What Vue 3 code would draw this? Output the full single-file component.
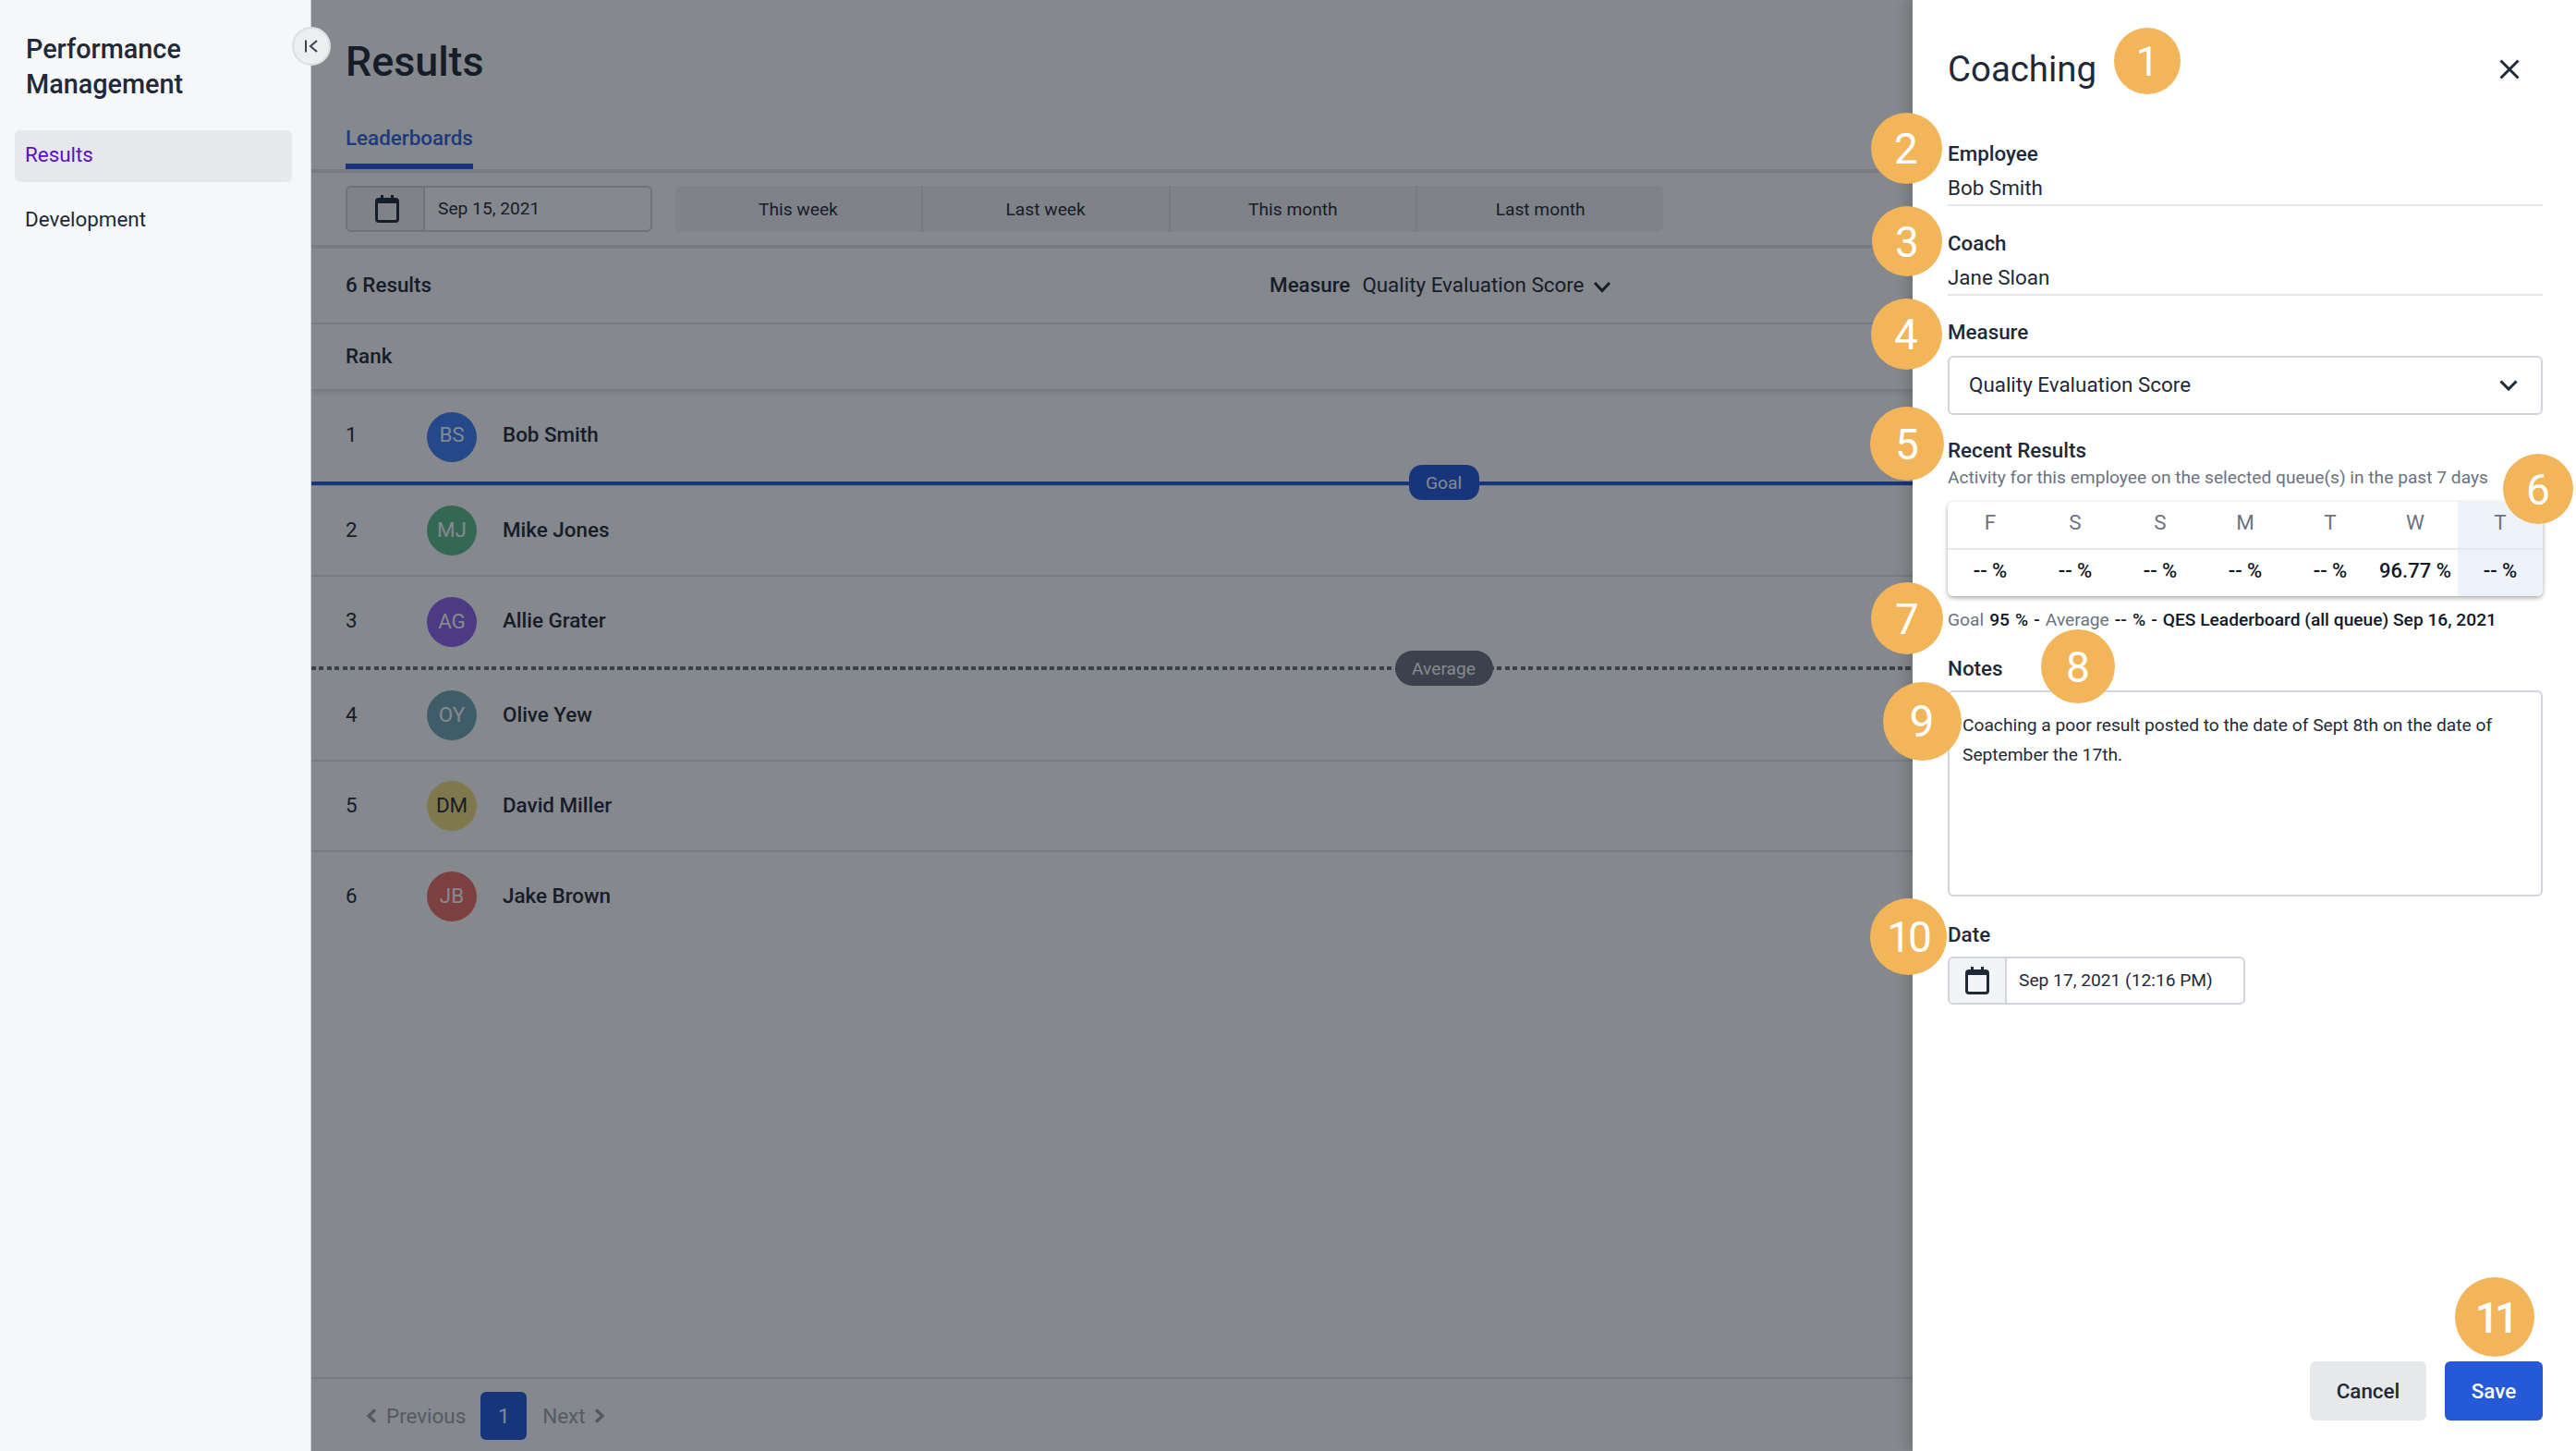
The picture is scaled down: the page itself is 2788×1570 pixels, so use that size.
<template>
  <div class="page">
    <!-- left nav -->
    <aside class="sidebar">
      <h1 class="app-title">Performance Management</h1>
      <a class="nav-item active">Results</a>
      <a class="nav-item">Development</a>
      <button class="collapse-btn">
        <svg width="14" height="14" viewBox="0 0 14 14" fill="none" stroke="#374151" stroke-width="2">
          <path d="M1 .5v13M13 1 6 7l7 6" />
        </svg>
      </button>
    </aside>

    <!-- results page, dimmed by the drawer -->
    <main class="main">
      <h2 class="page-title">Results</h2>
      <div class="tabs">
        <span class="tab">Leaderboards</span>
      </div>

      <div class="toolbar">
        <div class="date-field big">
          <span class="date-icon">
            <svg width="26" height="30" viewBox="0 0 26 30">
              <path d="M6 0h3v3h8V0h3v3h2a4 4 0 0 1 4 4v19a4 4 0 0 1-4 4H4a4 4 0 0 1-4-4V7a4 4 0 0 1 4-4h2zM3 9v17a1 1 0 0 0 1 1h18a1 1 0 0 0 1-1V9z" fill="#1f2937" />
            </svg>
          </span>
          <span class="date-text">Sep 15, 2021</span>
        </div>
        <div class="presets">
          <span v-for="p in presets" :key="p" class="preset">{{ p }}</span>
        </div>
      </div>

      <div class="summary">
        <span class="medium">6 Results</span>
        <div class="measure">
          <span class="medium">Measure</span>
          <span class="measure-value">Quality Evaluation Score</span>
          <svg class="measure-chevron" width="20" height="14" viewBox="0 0 20 14" fill="none" stroke="#1f2937" stroke-width="3">
            <path d="M2 3l8 8.500L18 3" />
          </svg>
        </div>
      </div>

      <div class="table-head medium"><span>Rank</span></div>

      <template v-for="row in rows" :key="row.rank">
        <div class="row" :class="row.cls">
          <span class="rank">{{ row.rank }}</span>
          <span class="avatar" :style="{ background: row.color, color: row.text || '#fff' }">{{ row.initials }}</span>
          <span class="name">{{ row.name }}</span>
        </div>
        <div v-if="row.rank === 1" class="goal-line">
          <span class="pill goal-pill">Goal</span>
        </div>
        <div v-if="row.rank === 3" class="average-line">
          <span class="pill average-pill">Average</span>
        </div>
      </template>

      <div class="pager">
        <svg width="12" height="16" viewBox="0 0 12 16" fill="none" stroke="#9ca3af" stroke-width="3.500">
          <path d="M10 1.500 3 8l7 6.500" />
        </svg>
        <span class="pager-text prev">Previous</span>
        <span class="page-num">1</span>
        <span class="pager-text next">Next</span>
        <svg width="12" height="16" viewBox="0 0 12 16" fill="none" stroke="#9ca3af" stroke-width="3.500">
          <path d="M2 1.500 9 8l-7 6.500" />
        </svg>
      </div>

      <div class="overlay"></div>
    </main>

    <!-- coaching drawer -->
    <section class="drawer">
      <header class="drawer-head">
        <h2 class="drawer-title">Coaching</h2>
        <svg class="close-icon" width="22" height="22" viewBox="0 0 22 22" fill="none" stroke="#1f2937" stroke-width="3">
          <path d="M1.500 1.500l19 19M20.500 1.500l-19 19" />
        </svg>
      </header>

      <label class="label">Employee</label>
      <div class="readonly">Bob Smith</div>

      <label class="label coach-label">Coach</label>
      <div class="readonly">Jane Sloan</div>

      <label class="label measure-label">Measure</label>
      <div class="select">
        <span>Quality Evaluation Score</span>
        <svg width="20" height="12" viewBox="0 0 20 12" fill="none" stroke="#1f2937" stroke-width="3">
          <path d="M1.500 1.500 10 10l8.500-8.500" />
        </svg>
      </div>

      <label class="label recent-label">Recent Results</label>
      <p class="hint">Activity for this employee on the selected queue(s) in the past 7 days</p>

      <div class="week">
        <div v-for="(d, i) in days" :key="i" class="day" :class="{ today: i === 6 }">
          <span class="day-name">{{ d.name }}</span>
          <span class="day-value">{{ d.value }}</span>
        </div>
      </div>

      <p class="goal-note"><span class="muted">Goal</span>&nbsp;<b>95 % -</b>&nbsp;<span class="muted">Average</span>&nbsp;<b>-- % -</b>&nbsp;<b class="source">QES Leaderboard (all queue) Sep 16, 2021</b></p>

      <label class="label notes-label">Notes</label>
      <div class="notes">Coaching a poor result posted to the date of Sept 8th on the date of September the 17th.</div>

      <label class="label date-label">Date</label>
      <div class="date-field small">
        <span class="date-icon">
          <svg width="26" height="30" viewBox="0 0 26 30">
            <path d="M6 0h3v3h8V0h3v3h2a4 4 0 0 1 4 4v19a4 4 0 0 1-4 4H4a4 4 0 0 1-4-4V7a4 4 0 0 1 4-4h2zM3 9v17a1 1 0 0 0 1 1h18a1 1 0 0 0 1-1V9z" fill="#1f2937" />
          </svg>
        </span>
        <span class="date-text">Sep 17, 2021 (12:16 PM)</span>
      </div>

      <footer class="actions">
        <button class="btn cancel">Cancel</button>
        <button class="btn save">Save</button>
      </footer>
    </section>

    <!-- numbered callouts sit on top of everything -->
    <span
      v-for="b in badges"
      :key="b.n"
      class="badge"
      :class="{ tight: b.n > 9, eleven: b.n === 11 }"
      :style="{ left: b.x - b.d / 2 + 'px', top: b.y - b.d / 2 + 'px', width: b.d + 'px', height: b.d + 'px', fontSize: b.f + 'px' }"
    >{{ b.n }}</span>
  </div>
</template>

<script setup>
const presets = ['This week', 'Last week', 'This month', 'Last month']

const rows = [
  { rank: 1, initials: 'BS', name: 'Bob Smith', color: '#3d7ffb', cls: 'r1' },
  { rank: 2, initials: 'MJ', name: 'Mike Jones', color: '#5fbf8f', cls: 'r2' },
  { rank: 3, initials: 'AG', name: 'Allie Grater', color: '#8e62f0', cls: 'r3' },
  { rank: 4, initials: 'OY', name: 'Olive Yew', color: '#70a9b8', cls: 'r4' },
  { rank: 5, initials: 'DM', name: 'David Miller', color: '#f5de80', text: '#1f2937', cls: 'r5' },
  { rank: 6, initials: 'JB', name: 'Jake Brown', color: '#ef6f68', cls: 'r6' }
]

const days = [
  { name: 'F', value: '-- %' },
  { name: 'S', value: '-- %' },
  { name: 'S', value: '-- %' },
  { name: 'M', value: '-- %' },
  { name: 'T', value: '-- %' },
  { name: 'W', value: '96.77 %' },
  { name: 'T', value: '-- %' }
]

// centre x, centre y, diameter, font size of each callout
const badges = [
  { n: 1, x: 2324, y: 66, d: 72, f: 44 },
  { n: 2, x: 2063, y: 160, d: 77, f: 46 },
  { n: 3, x: 2064, y: 261, d: 76, f: 46 },
  { n: 4, x: 2063, y: 361, d: 77, f: 46 },
  { n: 5, x: 2064, y: 480, d: 80, f: 46 },
  { n: 6, x: 2747, y: 529, d: 76, f: 46 },
  { n: 7, x: 2064, y: 669, d: 78, f: 46 },
  { n: 8, x: 2249, y: 721, d: 80, f: 46 },
  { n: 9, x: 2080, y: 780, d: 85, f: 48 },
  { n: 10, x: 2065, y: 1013, d: 83, f: 46 },
  { n: 11, x: 2700, y: 1425, d: 86, f: 46 }
]
</script>

<style>
html,
body {
  margin: 0;
  overflow: hidden;
}
</style>

<style scoped>
.page {
  position: relative;
  display: flex;
  width: 2788px;
  height: 1570px;
  overflow: hidden;
  font-family: Roboto, "Liberation Sans", sans-serif;
  font-size: 22.4px;
  color: #1f2937;
  background: #fff;
}

.medium {
  font-weight: 500;
}

/* sidebar */
.sidebar {
  position: relative;
  z-index: 2;
  flex: 0 0 337px;
  box-sizing: border-box;
  padding: 34px 20px 0 16px;
  background: #f5f7f8;
  border-right: 1px solid #c9cbce;
}

.app-title {
  margin: 0 0 31px 12px;
  font-size: 28.8px;
  font-weight: 500;
  line-height: 38px;
}

.nav-item {
  display: flex;
  align-items: center;
  box-sizing: border-box;
  height: 56px;
  margin-bottom: 14px;
  padding: 0 0 5px 11px;
  border-radius: 6px;
}

.nav-item.active {
  background: #e7e8ea;
  color: #5b10c8;
}

.collapse-btn {
  position: absolute;
  left: 316px;
  top: 29px;
  display: flex;
  align-items: center;
  justify-content: center;
  width: 42px;
  height: 42px;
  padding: 0;
  border: 2px solid #dcdee1;
  border-radius: 50%;
  background: #eceef0;
}

/* main */
.main {
  position: relative;
  flex: 1;
  display: flex;
  flex-direction: column;
  min-width: 0;
}

.overlay {
  position: absolute;
  inset: 0;
  background: rgba(11, 17, 25, 0.5);
}

.page-title {
  margin: 0;
  padding: 40px 37px 0;
  height: 54px;
  font-size: 44.8px;
  font-weight: 500;
  line-height: 54px;
}

.tabs {
  height: 89px;
  display: flex;
  align-items: flex-end;
  padding-left: 37px;
  border-bottom: 4px solid #e5e7eb;
}

.tab {
  padding-bottom: 15px;
  border-bottom: 6px solid #2359db;
  color: #2c62e0;
  font-weight: 500;
}

.toolbar {
  display: flex;
  align-items: center;
  gap: 25px;
  height: 78px;
  padding-left: 37px;
  border-bottom: 4px solid #e5e7eb;
  font-size: 19.2px;
}

.date-field {
  display: flex;
  box-sizing: border-box;
  width: 332px;
  height: 50px;
  border: 2px solid #d1d5db;
  border-radius: 6px;
  overflow: hidden;
  font-size: 19.2px;
}

.date-icon {
  display: flex;
  align-items: center;
  justify-content: center;
  flex: 0 0 82px;
  background: #f3f4f6;
  border-right: 2px solid #d1d5db;
}

.date-field.big .date-icon svg {
  margin-left: 4px;
}

.date-text {
  display: flex;
  align-items: center;
  padding: 0 0 2px 14px;
}

.presets {
  display: flex;
  width: 1069px;
  height: 50px;
  border-radius: 6px;
  background: #f3f4f6;
}

.preset {
  flex: 1;
  display: flex;
  align-items: center;
  justify-content: center;
  border-left: 2px solid #e5e7eb;
}

.preset:first-child {
  border-left: 0;
}

.summary {
  display: flex;
  align-items: center;
  box-sizing: border-box;
  height: 82px;
  padding: 0 0 3px 37px;
  border-bottom: 2px solid #e5e7eb;
}

.measure {
  display: flex;
  align-items: center;
  margin-left: 907px;
}

.measure-value {
  margin-left: 13px;
}

.measure-chevron {
  margin: 4px 0 0 10px;
}

.table-head {
  position: relative;
  display: flex;
  align-items: center;
  box-sizing: border-box;
  height: 70px;
  padding: 0 0 2px 37px;
  box-shadow: 0 4px 6px rgba(0, 0, 0, 0.12);
}

.row {
  display: flex;
  align-items: center;
  box-sizing: border-box;
  height: 98px;
  padding-left: 37px;
  border-bottom: 2px solid #e5e7eb;
  font-weight: 500;
}

.row.r1 {
  height: 100px;
  border-bottom: 0;
}

.row.r1 .avatar {
  margin-top: 3px;
  padding-bottom: 5px;
}

.row.r3 {
  height: 97px;
  border-bottom: 0;
}

.row.r4 {
  height: 99px;
}

.row.r6 {
  height: 96px;
  border-bottom: 0;
}

.rank {
  flex: 0 0 88px;
  padding-bottom: 2px;
  font-weight: 400;
}

.name {
  padding-bottom: 2px;
}

.row.r3 .name,
.row.r3 .rank {
  padding-bottom: 3px;
}

.avatar {
  display: flex;
  align-items: center;
  justify-content: center;
  box-sizing: border-box;
  flex: 0 0 54px;
  height: 54px;
  margin-right: 28px;
  padding-bottom: 2px;
  border-radius: 50%;
  font-weight: 400;
}

.goal-line {
  position: relative;
  flex: 0 0 auto;
  height: 4px;
  background: #2359db;
  border-bottom: 1px solid #e5e7eb;
}

.average-line {
  position: relative;
  flex: 0 0 auto;
  height: 4px;
  background: repeating-linear-gradient(90deg, #6b7280 0 5px, transparent 5px 8.500px);
}

.pill {
  position: absolute;
  left: 50%;
  top: 50%;
  transform: translate(-50%, -50%);
  display: flex;
  align-items: center;
  justify-content: center;
  height: 38px;
  color: #fff;
  font-size: 19.2px;
  font-weight: 400;
}

.goal-pill {
  top: 1px;
  width: 76px;
  border-radius: 14px;
  background: #2359db;
}

.average-pill {
  width: 106px;
  border-radius: 19px;
  background: #6b7280;
}

.pager {
  display: flex;
  align-items: center;
  margin-top: auto;
  height: 76px;
  padding: 2px 0 0 59px;
  border-top: 2px solid #e5e7eb;
  color: #9ca3af;
}

.pager-text.prev {
  margin: 0 16px 0 10px;
}

.pager-text.next {
  margin: 0 10px 0 17px;
}

.page-num {
  display: flex;
  align-items: center;
  justify-content: center;
  width: 50px;
  height: 52px;
  border-radius: 6px;
  background: #2359db;
  color: #fff;
}

/* drawer */
.drawer {
  position: absolute;
  z-index: 3;
  top: 0;
  right: 0;
  bottom: 0;
  box-sizing: border-box;
  width: 718px;
  padding: 0 36px 33px 38px;
  display: flex;
  flex-direction: column;
  background: #fff;
  box-shadow: -6px 0 12px rgba(0, 0, 0, 0.15);
}

.drawer-head {
  display: flex;
  align-items: center;
  justify-content: space-between;
  box-sizing: border-box;
  height: 153px;
  padding: 0 25px 5px 0;
}

.drawer-title {
  margin: 0;
  font-size: 38.4px;
  font-weight: 400;
}

.close-icon {
  margin-top: 2px;
}

.label {
  display: block;
  font-weight: 500;
  line-height: 26px;
}

.readonly {
  box-sizing: border-box;
  margin-top: 11px;
  height: 33px;
  line-height: 26px;
  border-bottom: 2px solid #e5e7eb;
}

.coach-label {
  margin-top: 27px;
}

.measure-label {
  margin-top: 26px;
}

.select {
  display: flex;
  align-items: center;
  justify-content: space-between;
  box-sizing: border-box;
  height: 64px;
  margin-top: 13px;
  padding: 0 25px 3px 21px;
  border: 2px solid #d1d5db;
  border-radius: 6px;
}

.select svg {
  margin-top: 3px;
}

.recent-label {
  margin-top: 25px;
}

.hint {
  margin: 5px 0 0;
  color: #6b7280;
  font-size: 19.2px;
  line-height: 24px;
}

.week {
  display: flex;
  height: 102px;
  margin-top: 14px;
  border-radius: 6px;
  overflow: hidden;
  box-shadow: 0 2px 5px rgba(0, 0, 0, 0.35);
}

.day {
  flex: 1;
  display: flex;
  flex-direction: column;
  align-items: center;
}

.day.today {
  background: #eef3fb;
}

.day-name {
  box-sizing: border-box;
  align-self: stretch;
  height: 52px;
  padding-top: 9px;
  text-align: center;
  color: #6b7280;
  line-height: 26px;
  border-bottom: 2px solid #e5e7eb;
}

.day-value {
  margin-top: 10px;
  font-size: 22px;
  font-weight: 500;
  line-height: 26px;
  color: #111827;
}

.goal-note {
  margin: 14px 0 0;
  font-size: 19.2px;
  line-height: 24px;
  color: #111827;
  white-space: nowrap;
  word-spacing: 1.300px;
}

.goal-note b {
  font-weight: 500;
}

.goal-note .source {
  word-spacing: 0;
}

.muted {
  color: #6b7280;
}

.notes-label {
  margin-top: 27px;
}

.notes {
  box-sizing: border-box;
  height: 223px;
  margin-top: 11px;
  padding: 20px 30px 0 14px;
  border: 2px solid #d1d5db;
  border-radius: 6px;
  font-size: 19.2px;
  line-height: 32px;
}

.date-label {
  margin-top: 28px;
}

.date-field.small {
  width: 322px;
  height: 52px;
  margin-top: 11px;
}

.date-field.small .date-icon {
  flex-basis: 60px;
}

.date-field.small .date-text {
  padding-left: 13px;
}

.actions {
  display: flex;
  justify-content: flex-end;
  gap: 20px;
  margin-top: auto;
}

.btn {
  height: 64px;
  border: 0;
  border-radius: 6px;
  font-family: inherit;
  font-size: 22.4px;
  font-weight: 500;
}

.btn.cancel {
  width: 126px;
  background: #e7e8ea;
  color: #1f2937;
}

.btn.save {
  width: 106px;
  background: #2559d8;
  color: #fff;
}

.badge {
  position: absolute;
  z-index: 4;
  display: flex;
  align-items: center;
  justify-content: center;
  box-sizing: border-box;
  padding-top: 2px;
  border-radius: 50%;
  background: #f2b55a;
  color: #fff;
  font-family: Roboto, sans-serif;
  line-height: 1;
}

.badge.tight {
  letter-spacing: -3px;
}

.badge.eleven {
  letter-spacing: -5px;
  font-weight: 500;
}
</style>
